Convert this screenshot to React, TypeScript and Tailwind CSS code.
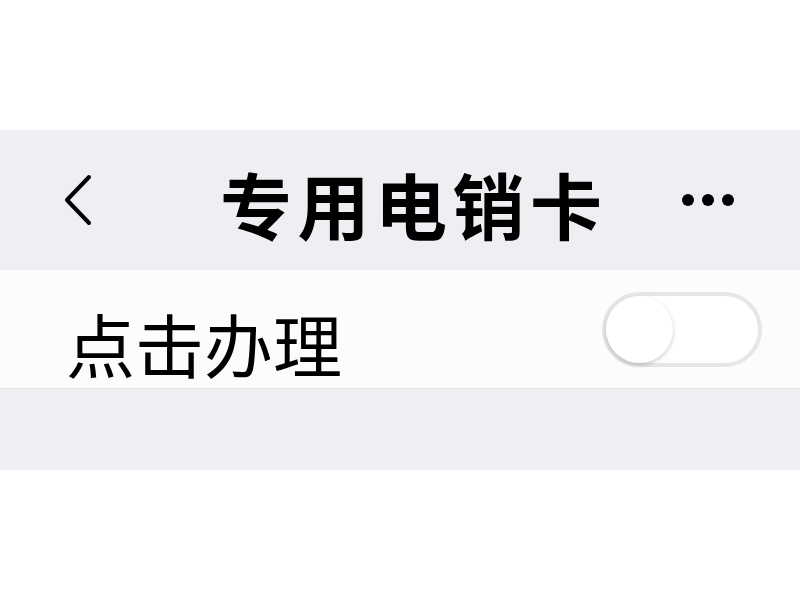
import { useState } from "react"

export default function App() {
  const [on, setOn] = useState(false)

  return (
    <div
      className="w-[800px] h-[600px] bg-white"
      style={{ fontFamily: '"Noto Sans CJK SC", "Noto Sans", sans-serif' }}
    >
      <div className="h-[130px]" />

      {/* Nav bar */}
      <div className="h-[140px] bg-[#efeef3] flex items-center pl-[62px] pr-[66px]">
        <svg width="30" height="52" viewBox="0 0 30 52" fill="none" className="shrink-0">
          <path d="M27 3 L5 26 L27 49" stroke="#000" strokeWidth="4" strokeLinecap="round" strokeLinejoin="round" />
        </svg>
        <h1 className="ml-[128px] mt-[6px] text-[72px] leading-none font-bold tracking-[5.5px] text-black">专用电销卡</h1>
        <div className="ml-auto flex items-center gap-[8px]">
          <span className="w-[12px] h-[12px] rounded-full bg-black" />
          <span className="w-[12px] h-[12px] rounded-full bg-black" />
          <span className="w-[12px] h-[12px] rounded-full bg-black" />
        </div>
      </div>

      {/* Row */}
      <div className="h-[119px] bg-[#fcfcfc] border-b border-[#e2e2e4] flex items-center pl-[66px] pr-[38px]">
        <span className="mt-[28px] text-[69px] leading-none text-black">点击办理</span>
        <button
          onClick={() => setOn(!on)}
          className={`ml-auto w-[160px] h-[75px] rounded-full border-[4px] border-[#e6e6e6] flex items-center ${on ? "bg-[#4cd964] justify-end" : "bg-white justify-start"}`}
        >
          <span className="w-[67px] h-[67px] rounded-full bg-white shadow-[0_2px_4px_rgba(0,0,0,0.2)]" />
        </button>
      </div>

      <div className="h-[81px] bg-[#efeef3]" />
    </div>
  )
}
